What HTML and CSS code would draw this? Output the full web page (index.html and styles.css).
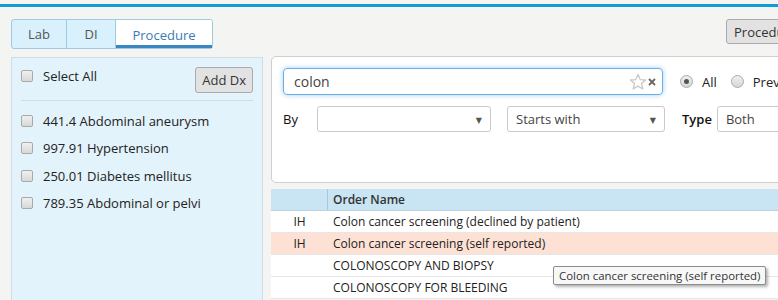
FILE: index.html
```html
<!DOCTYPE html>
<html lang="en">
<head>
  <meta charset="UTF-8">
  <title>Orders</title>
  <link rel="stylesheet" href="styles.css">
</head>
<body>
  <div class="topline"></div>
  <div class="header">
    <div class="tabs">
      <div class="tab tab-lab">Lab</div>
      <div class="tab tab-di">DI</div>
      <div class="tab tab-proc active">Procedure</div>
    </div>
    <button class="btn btn-proc">Procedure</button>
  </div>

  <div class="main">
    <div class="left">
      <div class="left-head">
        <label class="chk-row"><span class="chk"></span>Select All</label>
        <button class="btn btn-dx">Add Dx</button>
      </div>
      <ul class="dx-list">
        <li class="chk-row"><span class="chk"></span>441.4 Abdominal aneurysm</li>
        <li class="chk-row"><span class="chk"></span>997.91 Hypertension</li>
        <li class="chk-row"><span class="chk"></span>250.01 Diabetes mellitus</li>
        <li class="chk-row"><span class="chk"></span>789.35 Abdominal or pelvi</li>
      </ul>
    </div>

    <div class="right">
      <div class="card">
        <div class="row row-search">
          <div class="search">
            <span class="search-text">colon</span>
            <svg class="star" width="18" height="18" viewBox="0 0 18 18">
              <path d="M9 1.5 L11.2 6.6 L16.6 7 L12.5 10.6 L13.8 16 L9 13.1 L4.2 16 L5.5 10.6 L1.4 7 L6.8 6.6 Z" fill="none" stroke="#c8c8c8" stroke-width="1.3" stroke-linejoin="round"/>
            </svg>
            <svg class="clear" width="8" height="8" viewBox="0 0 8 8">
              <path d="M1 1 L7 7 M7 1 L1 7" stroke="#666" stroke-width="1.8"/>
            </svg>
          </div>
          <label class="radio-row"><span class="radio on"></span>All</label>
          <label class="radio-row"><span class="radio"></span>Previous</label>
        </div>
        <div class="row row-filter">
          <span class="lbl lbl-by">By</span>
          <div class="select sel-by"><span></span><i>&#9660;</i></div>
          <div class="select sel-match"><span>Starts with</span><i>&#9660;</i></div>
          <span class="lbl lbl-type">Type</span>
          <div class="select sel-type"><span>Both</span><i>&#9660;</i></div>
        </div>
      </div>

      <div class="grid">
        <div class="grid-row grid-head">
          <div class="c1"></div>
          <div class="c2">Order Name</div>
        </div>
        <div class="grid-row">
          <div class="c1">IH</div>
          <div class="c2">Colon cancer screening (declined by patient)</div>
        </div>
        <div class="grid-row hover">
          <div class="c1">IH</div>
          <div class="c2">Colon cancer screening (self reported)</div>
        </div>
        <div class="grid-row">
          <div class="c1"></div>
          <div class="c2">COLONOSCOPY AND BIOPSY</div>
        </div>
        <div class="grid-row">
          <div class="c1"></div>
          <div class="c2">COLONOSCOPY FOR BLEEDING</div>
        </div>
        <div class="tooltip">Colon cancer screening (self reported)</div>
      </div>
    </div>
  </div>
</body>
</html>
```

FILE: styles.css
```css
* {
  box-sizing: border-box;
}
body {
  margin: 0;
  background: #f4f4f3;
  font-family: "Open Sans", "DejaVu Sans", sans-serif;
  font-size: 13px;
  color: #333;
  overflow: hidden;
  width: 778px;
  height: 300px;
}
.topline {
  margin-top: 4px;
  height: 3px;
  background: #159ad8;
}
.header {
  display: flex;
  align-items: flex-start;
  padding: 12px 0 0 11px;
  height: 49px;
}
.tabs {
  display: flex;
  flex: none;
  height: 30px;
  border: 1px solid #9ccbe3;
  border-radius: 3px;
  background: #d8f1fc;
}
.tab {
  display: flex;
  align-items: center;
  justify-content: center;
  color: #555;
  font-size: 13px;
  border-right: 1px solid #9ccbe3;
}
.tab-lab {
  width: 55px;
}
.tab-di {
  width: 49px;
}
.tab-proc {
  width: 96px;
  border-right: none;
}
.tab.active {
  background: #fff;
  color: #3c7ab6;
  border-bottom: 3px solid #3a86c0;
  padding-top: 4px;
  border-radius: 0 2px 0 0;
}
.btn {
  font-family: "Open Sans", "DejaVu Sans", sans-serif;
  font-size: 13px;
  color: #333;
  background: #e2e2e2;
  border: 1px solid #aaa;
  border-radius: 3px;
  padding: 0 7px;
  white-space: nowrap;
}
.btn-proc {
  flex: none;
  margin-left: 513px;
  height: 25px;
}
.main {
  display: flex;
  align-items: flex-start;
}
.left {
  flex: none;
  margin-left: 11px;
  margin-top: 1px;
  width: 252px;
  height: 250px;
  background: #e3f3fb;
  border: 1px solid #cfdde4;
  border-bottom: none;
  padding: 0 9px;
}
.left-head {
  display: flex;
  justify-content: space-between;
  align-items: flex-start;
  padding: 9px 0 7px;
  border-bottom: 1px solid #d4dde1;
}
.chk-row {
  display: flex;
  align-items: center;
  color: #222;
}
.chk {
  width: 12px;
  height: 12px;
  border: 1px solid #a9a9a9;
  border-radius: 2px;
  background: linear-gradient(#f0f0f0, #d8d8d8);
  margin-right: 10px;
  flex: none;
}
.btn-dx {
  height: 26px;
  padding: 0 6px;
}
.dx-list {
  list-style: none;
  margin: 0;
  padding: 6px 0 0;
}
.dx-list li {
  height: 27.5px;
}
.right {
  flex: none;
  margin-left: 8px;
  width: 620px;
}
.card {
  height: 127px;
  width: 620px;
  background: #fff;
  border: 1px solid #cfcfcf;
  border-radius: 5px;
  padding: 11px 0 0 11px;
}
.row {
  display: flex;
  align-items: center;
}
.search {
  flex: none;
  width: 380px;
  height: 27px;
  border: 1px solid #66afe9;
  border-radius: 4px;
  box-shadow: 0 0 5px rgba(102, 175, 233, .6);
  display: flex;
  align-items: center;
  padding: 0 6px 0 10px;
}
.search-text {
  flex: 1;
  font-size: 14px;
  color: #444;
}
.star {
  margin-right: 1px;
}
.radio-row {
  flex: none;
  display: flex;
  align-items: center;
  color: #222;
  margin-left: 17px;
}
.radio-row + .radio-row {
  margin-left: 14px;
}
.radio {
  width: 13px;
  height: 13px;
  border-radius: 50%;
  border: 1px solid #aaa;
  background: linear-gradient(#f0f0f0, #d6d6d6);
  margin-right: 9px;
  position: relative;
}
.radio.on::after {
  content: "";
  position: absolute;
  left: 3px;
  top: 3px;
  width: 5px;
  height: 5px;
  border-radius: 50%;
  background: #555;
}
.row-filter {
  margin-top: 11px;
}
.lbl {
  flex: none;
  color: #111;
  font-weight: 600;
}
.lbl-by {
  width: 34px;
  font-weight: 400;
}
.lbl-type {
  margin: 0 5px 0 17px;
}
.select {
  flex: none;
  height: 26px;
  border: 1px solid #cacaca;
  border-radius: 3px;
  display: flex;
  align-items: center;
  justify-content: space-between;
  padding: 0 8px 0 8px;
  color: #444;
}
.select i {
  font-style: normal;
  font-size: 8px;
  color: #555;
}
.sel-by {
  width: 174px;
}
.sel-match {
  width: 158px;
  margin-left: 16px;
}
.sel-type {
  width: 120px;
}
.grid {
  margin-top: 6px;
  position: relative;
  width: 620px;
}
.grid-row {
  display: flex;
  height: 22px;
  background: #fff;
  border-bottom: 1px solid #e6e6e6;
  color: #222;
  font-size: 12px;
}
.grid-row .c1 {
  width: 57px;
  text-align: center;
  line-height: 21px;
}
.grid-row .c2 {
  padding-left: 5px;
  line-height: 21px;
}
.grid-head {
  background: #c9e4f2;
  border-bottom: 1px solid #b9d3e0;
}
.grid-head .c1 {
  border-right: 1px solid #a9c8d8;
}
.grid-head .c2 {
  font-weight: 600;
  color: #333;
}
.grid-row.hover {
  background: #fde1d5;
}
.tooltip {
  position: absolute;
  left: 282px;
  top: 77px;
  padding: 0 5px;
  height: 19px;
  line-height: 17px;
  font-size: 11.4px;
  color: #333;
  background: #f7f7f7;
  border: 1px solid #8c8c8c;
  border-radius: 2px;
  box-shadow: 2px 2px 3px rgba(0, 0, 0, .3);
  white-space: nowrap;
}
```
